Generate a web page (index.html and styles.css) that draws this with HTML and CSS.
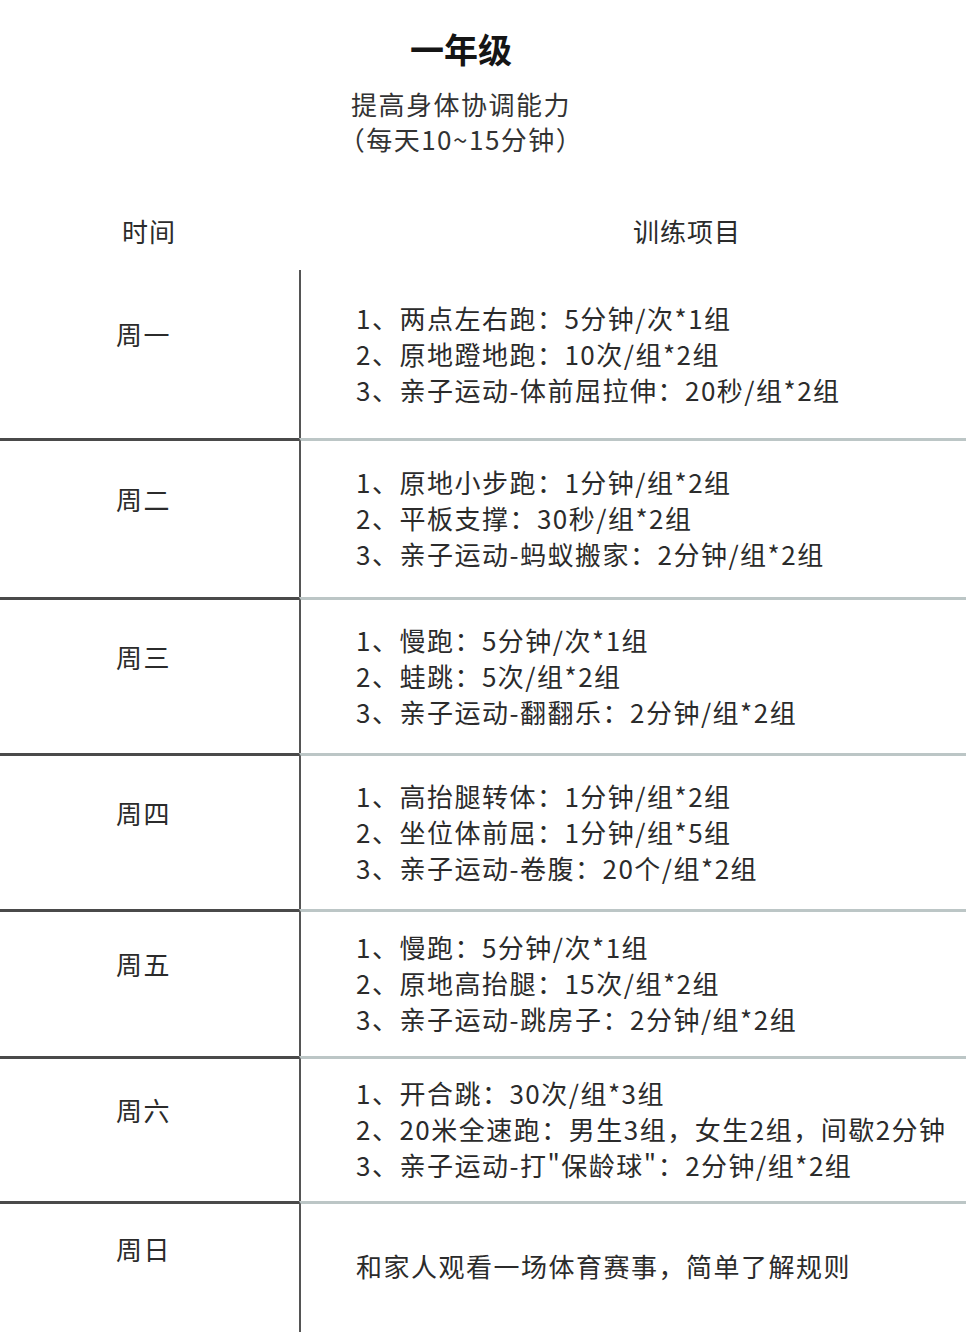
FILE: index.html
```html
<!DOCTYPE html>
<html lang="zh-CN">
<head>
<meta charset="utf-8">
<title>一年级</title>
<link rel="stylesheet" href="styles.css">
</head>
<body>
<div class="page">
  <header class="intro">
    <h1 class="title">一年级</h1>
    <p class="subtitle">提高身体协调能力<br>（每天10~15分钟）</p>
  </header>
  <div class="thead">
    <div class="th th-day">时间</div>
    <div class="th th-items">训练项目</div>
  </div>
  <div class="tbody">
    <div class="row r1">
      <div class="day">周一</div>
      <div class="items">1、两点左右跑：5分钟/次*1组<br>2、原地蹬地跑：10次/组*2组<br>3、亲子运动-体前屈拉伸：20秒/组*2组</div>
    </div>
    <div class="row r2">
      <div class="day">周二</div>
      <div class="items">1、原地小步跑：1分钟/组*2组<br>2、平板支撑：30秒/组*2组<br>3、亲子运动-蚂蚁搬家：2分钟/组*2组</div>
    </div>
    <div class="row r3">
      <div class="day">周三</div>
      <div class="items">1、慢跑：5分钟/次*1组<br>2、蛙跳：5次/组*2组<br>3、亲子运动-翻翻乐：2分钟/组*2组</div>
    </div>
    <div class="row r4">
      <div class="day">周四</div>
      <div class="items">1、高抬腿转体：1分钟/组*2组<br>2、坐位体前屈：1分钟/组*5组<br>3、亲子运动-卷腹：20个/组*2组</div>
    </div>
    <div class="row r5">
      <div class="day">周五</div>
      <div class="items">1、慢跑：5分钟/次*1组<br>2、原地高抬腿：15次/组*2组<br>3、亲子运动-跳房子：2分钟/组*2组</div>
    </div>
    <div class="row r6">
      <div class="day">周六</div>
      <div class="items">1、开合跳：30次/组*3组<br>2、20米全速跑：男生3组，女生2组，间歇2分钟<br>3、亲子运动-打"保龄球"：2分钟/组*2组</div>
    </div>
    <div class="row r7">
      <div class="day">周日</div>
      <div class="items">和家人观看一场体育赛事，简单了解规则</div>
    </div>
  </div>
</div>
</body>
</html>
```
FILE: styles.css
```css
html, body {
  margin: 0;
  padding: 0;
  background: #ffffff;
}
body {
  font-family: "Noto Sans CJK SC", "Noto Sans", sans-serif;
  color: #2b2b2b;
  overflow: hidden;
}
.page {
  width: 966px;
  height: 1332px;
  overflow: hidden;
}
.intro {
  padding-top: 27px;
  padding-right: 44px;
  height: 167px;
  box-sizing: border-box;
  text-align: center;
}
.title {
  margin: 0;
  font-size: 34px;
  line-height: 44px;
  font-weight: 700;
  color: #151515;
}
.subtitle {
  margin: 15px 0 0 0;
  font-size: 26px;
  line-height: 35px;
  letter-spacing: 1.5px;
  color: #333333;
}
.thead {
  display: grid;
  grid-template-columns: 300px 1fr;
  height: 103px;
  align-items: center;
  font-size: 26px;
  letter-spacing: 1px;
  color: #2b2b2b;
  padding-top: 23px;
  box-sizing: border-box;
}
.th-day {
  padding-left: 122px;
}
.th-items {
  padding-left: 333px;
}
.row {
  display: grid;
  grid-template-columns: 300px 1fr;
  font-size: 26px;
  letter-spacing: 1.5px;
  color: #2b2b2b;
}
.day {
  display: flex;
  align-items: center;
  padding-left: 116px;
  padding-bottom: 41px;
  border-top: 3px solid #4a4a4a;
}
.items {
  display: flex;
  align-items: center;
  padding-left: 55px;
  padding-bottom: 2px;
  line-height: 36px;
  border-left: 2px solid #555555;
  border-top: 3px solid #bcc6c6;
  margin-left: -1px;
}
.r1 .day, .r1 .items { border-top: 0; }
.r1 .items { padding-bottom: 0; }
.r1 { height: 168px; }
.r2 { height: 159px; }
.r3 { height: 156px; }
.r4 { height: 156px; }
.r5 { height: 147px; }
.r6 { height: 145px; }
.r7 { height: 140px; }
.r7 .items { align-items: flex-start; padding-top: 44px; padding-bottom: 0; }
.r7 .day { align-items: flex-start; padding-top: 26px; padding-bottom: 0; }
```
